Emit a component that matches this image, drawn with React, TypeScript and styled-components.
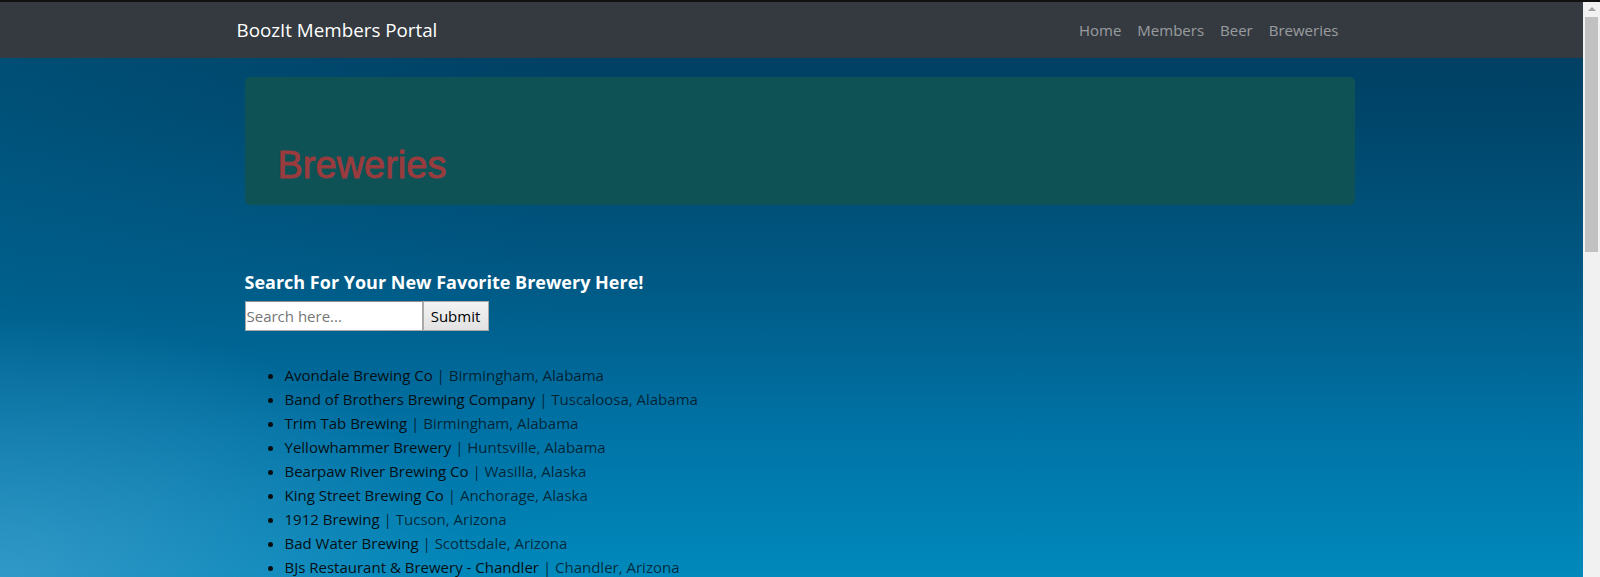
import { useState } from "react";
import styled, { createGlobalStyle } from "styled-components";

const GlobalStyle = createGlobalStyle`
  html, body {
    margin: 0;
    padding: 0;
  }
  body {
    font-family: "Open Sans", "Noto Sans", sans-serif;
    font-size: 16px;
    line-height: 1.5;
    color: #000;
    background:
      radial-gradient(ellipse 30% 45% at 0% 100%, rgba(90, 175, 220, 0.55), rgba(90, 175, 220, 0) 100%),
      linear-gradient(to right, rgba(0, 105, 150, 0.35), rgba(0, 105, 150, 0) 35%),
      linear-gradient(to bottom, #003b5e 0%, #00456a 20%, #005a86 50%, #0073a6 75%, #0089bc 100%);
    background-attachment: fixed;
  }
  * { box-sizing: border-box; }
`;

const breweries = [
  { name: "Avondale Brewing Co", city: "Birmingham", state: "Alabama" },
  { name: "Band of Brothers Brewing Company", city: "Tuscaloosa", state: "Alabama" },
  { name: "Trim Tab Brewing", city: "Birmingham", state: "Alabama" },
  { name: "Yellowhammer Brewery", city: "Huntsville", state: "Alabama" },
  { name: "Bearpaw River Brewing Co", city: "Wasilla", state: "Alaska" },
  { name: "King Street Brewing Co", city: "Anchorage", state: "Alaska" },
  { name: "1912 Brewing", city: "Tucson", state: "Arizona" },
  { name: "Bad Water Brewing", city: "Scottsdale", state: "Arizona" },
  { name: "BJs Restaurant & Brewery - Chandler", city: "Chandler", state: "Arizona" },
];

function App() {
  const [query, setQuery] = useState("");

  return (
    <>
      <GlobalStyle />
      <TopStrip />
      <Page>
        <Navbar>
          <NavInner>
            <Brand href="#">BoozIt Members Portal</Brand>
            <NavList>
              <NavItem><NavLink href="#">Home</NavLink></NavItem>
              <NavItem><NavLink href="#">Members</NavLink></NavItem>
              <NavItem><NavLink href="#">Beer</NavLink></NavItem>
              <NavItem><NavLink href="#">Breweries</NavLink></NavItem>
            </NavList>
          </NavInner>
        </Navbar>
        <Main>
          <Jumbotron>
            <PageTitle>Breweries</PageTitle>
          </Jumbotron>
          <SearchTitle>Search For Your New Favorite Brewery Here!</SearchTitle>
          <SearchForm onSubmit={(e) => e.preventDefault()}>
            <SearchInput
              placeholder="Search here..."
              value={query}
              onChange={(e) => setQuery(e.target.value)}
            />
            <SubmitButton type="submit">Submit</SubmitButton>
          </SearchForm>
          <BreweryList>
            {breweries.map((b) => (
              <BreweryItem key={b.name}>
                {b.name} <Location>| {b.city}, {b.state}</Location>
              </BreweryItem>
            ))}
          </BreweryList>
        </Main>
      </Page>
      <ScrollTrack>
        <ScrollArrow />
        <ScrollThumb />
      </ScrollTrack>
    </>
  );
}

const TopStrip = styled.div`
  height: 2px;
  background-color: #111;
`;

const Page = styled.div`
  margin-right: 17px;
`;

const Navbar = styled.nav`
  background-color: #343a40;
  padding: 8px 0;
`;

const NavInner = styled.div`
  width: 1140px;
  margin: 0 auto;
  padding: 0 15px;
  display: flex;
  align-items: center;
  justify-content: space-between;
`;

const Brand = styled.a`
  font-size: 18.8px;
  line-height: 30px;
  padding: 5px 0;
  color: #fff;
  text-decoration: none;
`;

const NavList = styled.ul`
  display: flex;
  list-style: none;
  margin: 0;
  padding: 0;
`;

const NavItem = styled.li``;

const NavLink = styled.a`
  display: block;
  padding: 8px 8px;
  font-size: 15px;
  color: rgba(255, 255, 255, 0.5);
  text-decoration: none;
`;

const Main = styled.main`
  width: 1110px;
  margin-left: calc(50% - 547px);
  padding-top: 19px;
  padding-bottom: 40px;
`;

const Jumbotron = styled.div`
  height: 128px;
  background-color: #0e5256;
  border-radius: 5px;
  padding: 0 32px 16px 33px;
  display: flex;
  align-items: flex-end;
`;

const PageTitle = styled.h1`
  margin: 0;
  font-family: "Liberation Sans", Arial, sans-serif;
  font-size: 38px;
  font-weight: 400;
  line-height: 1.2;
  color: #9a3b3e;
  -webkit-text-stroke: 0.9px #9a3b3e;
`;

const SearchTitle = styled.h3`
  margin: 65px 0 6px;
  font-size: 18px;
  font-weight: 700;
  line-height: 1.4;
  color: #fff;
`;

const SearchForm = styled.form`
  display: flex;
`;

const SearchInput = styled.input`
  width: 178px;
  height: 30px;
  border: 1px solid #a9a9a9;
  border-top-color: #8f8f8f;
  padding: 0 1px;
  font-family: "Open Sans", sans-serif;
  font-size: 15px;
  color: #222;
  background: #fff;
  &::placeholder {
    color: #767676;
  }
`;

const SubmitButton = styled.button`
  width: 66px;
  height: 30px;
  border: 1px solid #a9a9a9;
  background: linear-gradient(#f3f3f3, #e2e2e2);
  font-family: "Open Sans", sans-serif;
  font-size: 15px;
  color: #000;
  padding: 0 6px;
`;

const BreweryList = styled.ul`
  margin: 32px 0 0;
  padding-left: 40px;
`;

const BreweryItem = styled.li`
  font-size: 15px;
  line-height: 24px;
  color: #050f14;
`;

const Location = styled.span`
  color: rgba(0, 0, 0, 0.7);
`;

const ScrollTrack = styled.div`
  position: fixed;
  top: 2px;
  right: 0;
  bottom: 0;
  width: 17px;
  background: #f1f1f1;
  display: flex;
  flex-direction: column;
  align-items: center;
`;

const ScrollArrow = styled.div`
  margin-top: 5px;
  width: 0;
  height: 0;
  border-left: 4px solid transparent;
  border-right: 4px solid transparent;
  border-bottom: 4px solid #a3a3a3;
`;

const ScrollThumb = styled.div`
  margin-top: 6px;
  width: 13px;
  height: 235px;
  background: #c1c1c1;
`;

export default App;
